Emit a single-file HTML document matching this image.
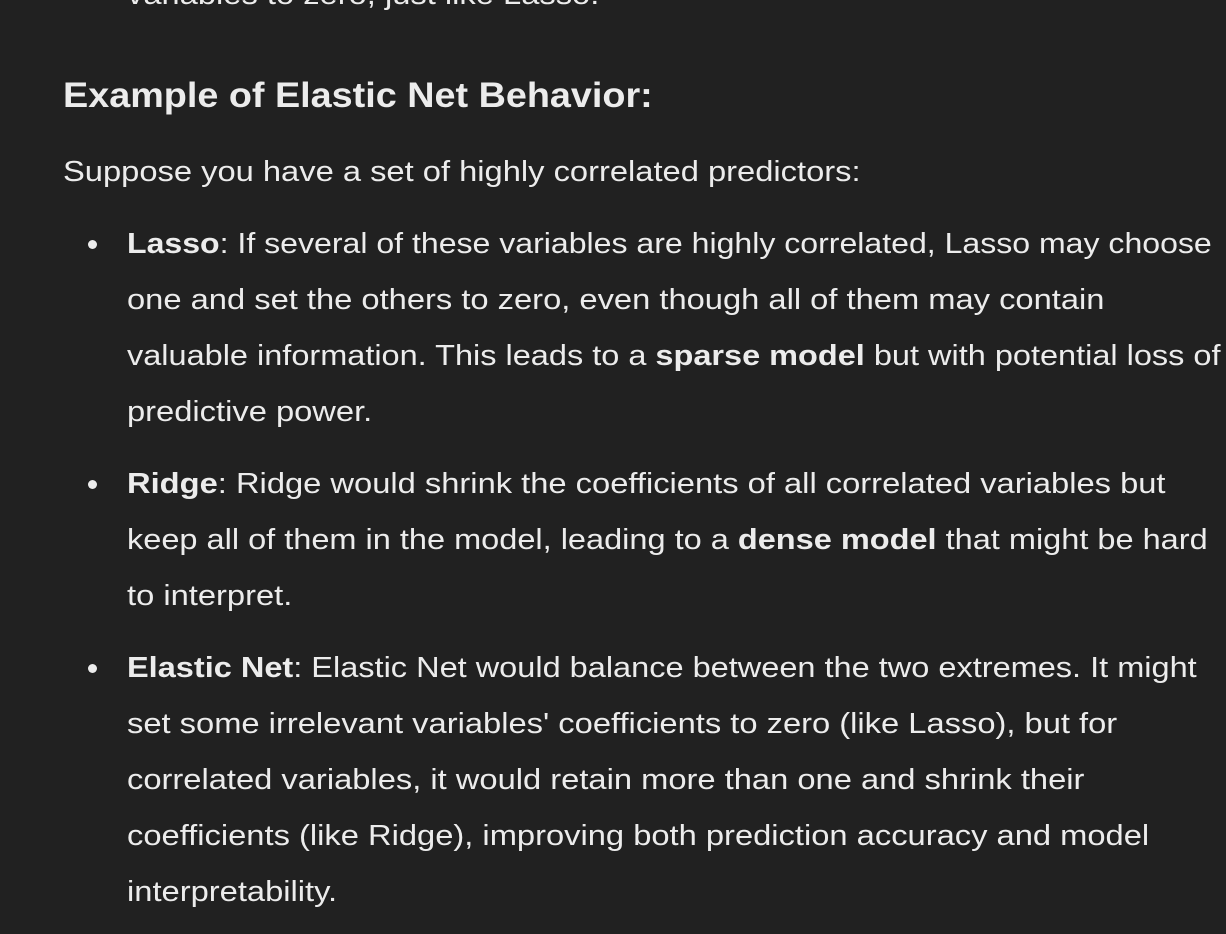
<!DOCTYPE html>
<html><head><meta charset="utf-8"><style>
body{margin:0;width:1226px;height:934px;background:#212121;color:#ececec;font-family:"Liberation Sans",sans-serif;overflow:hidden;position:relative}
.l{position:absolute;white-space:nowrap;font-size:29px;line-height:56px;height:56px;transform:scaleX(1.127);transform-origin:0 50%}
b{font-weight:bold}
.d{position:absolute;width:9px;height:9px;border-radius:50%;background:#ececec;left:88px}
</style></head><body>
<div class="l" style="left:127px;top:-33px">variables to zero, just like Lasso.</div>
<div class="l" style="left:63px;top:68px;font-size:35px;font-weight:bold;transform:scaleX(1.079)">Example of Elastic Net Behavior:</div>
<div class="l" style="left:63px;top:144px">Suppose you have a set of highly correlated predictors:</div>
<div class="d" style="top:240px"></div>
<div class="l" style="left:127px;top:216px;transform:scaleX(1.105)"><b>Lasso</b>: If several of these variables are highly correlated, Lasso may choose</div>
<div class="l" style="left:127px;top:272px">one and set the others to zero, even though all of them may contain</div>
<div class="l" style="left:127px;top:328px;transform:scaleX(1.12)">valuable information. This leads to a <b>sparse model</b> but with potential loss of</div>
<div class="l" style="left:127px;top:384px">predictive power.</div>
<div class="d" style="top:480px"></div>
<div class="l" style="left:127px;top:456px">  <b>Ridge</b>: Ridge would shrink the coefficients of all correlated variables but</div>
<div class="l" style="left:127px;top:512px;transform:scaleX(1.121)">keep all of them in the model, leading to a <b>dense model</b> that might be hard</div>
<div class="l" style="left:127px;top:568px">to interpret.</div>
<div class="d" style="top:664px"></div>
<div class="l" style="left:127px;top:640px;transform:scaleX(1.121)"><b>Elastic Net</b>: Elastic Net would balance between the two extremes. It might</div>
<div class="l" style="left:127px;top:696px">set some irrelevant variables' coefficients to zero (like Lasso), but for</div>
<div class="l" style="left:127px;top:752px">correlated variables, it would retain more than one and shrink their</div>
<div class="l" style="left:127px;top:808px">coefficients (like Ridge), improving both prediction accuracy and model</div>
<div class="l" style="left:127px;top:864px">interpretability.</div>
</body></html>
